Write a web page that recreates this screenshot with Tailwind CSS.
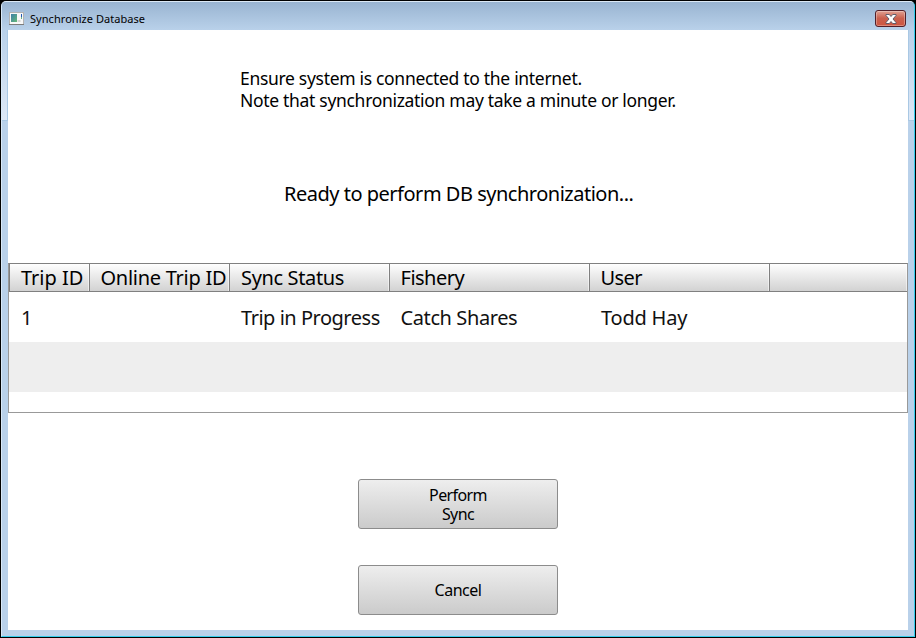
<!DOCTYPE html>
<html lang="en">
<head>
<meta charset="utf-8">
<title>Synchronize Database</title>
<script src="https://cdn.jsdelivr.net/npm/@tailwindcss/browser@4"></script>
</head>
<body class="h-[638px] w-[916px] overflow-hidden bg-black p-px font-['Noto_Sans','Liberation_Sans',sans-serif] text-black">
<div class="flex h-[636px] w-[914px] flex-col rounded-t-[5px] border border-t-[#dce9f5] border-r-[#35cdec] border-b-[#35cdec] border-l-[#d9e9f8] bg-[#b9d1ea]">
  <header class="flex h-7 shrink-0 items-start justify-between rounded-t-[4px] bg-linear-to-b from-[#99b4d1] to-[#b9d1ea] pr-[8px] pl-[7px]">
    <div class="flex h-[32px] items-center">
      <svg class="h-[13px] w-[15px]" viewBox="0 0 15 13">
        <defs><linearGradient id="pic" x1="0" y1="0" x2="1" y2="1"><stop offset="0" stop-color="#3d7fa8"/><stop offset="1" stop-color="#64b878"/></linearGradient></defs>
        <rect x=".5" y=".5" width="14" height="12" fill="#f8f8f8" stroke="#b3b3b3"/>
        <path d="M0 12.5H15" stroke="#7c7c7c"/>
        <rect x="2" y="2" width="6" height="8" fill="url(#pic)"/>
        <rect x="8.500" y="8" width="3" height="2" fill="#d5d5d5"/>
        <rect x="12" y="2" width="1" height="3" fill="#2458b4"/>
        <rect x="12" y="5" width="1" height="2" fill="#69b185"/>
      </svg>
      <h1 class="mt-[2px] ml-[6px] text-[11px] leading-4 tracking-[0.05px]">Synchronize Database</h1>
    </div>
    <button aria-label="Close" class="mt-2 flex h-[17px] w-[31px] items-center justify-center rounded-[3px] border border-[#521f28] bg-linear-to-b from-[#e0a193] from-0% via-[#c9604e] via-48% to-[#cf5540] shadow-[inset_0_0_0_1px_rgba(255,255,255,0.3)]">
      <svg class="h-[10px] w-[12px]" viewBox="0 0 12 10">
        <path d="M1 .5H4.300L6 2.500 7.700.5H11V1.500L8 5 11 8.500V9.500H7.700L6 7.500 4.300 9.500H1V8.500L4 5 1 1.500Z" fill="#fff" stroke="#535666" stroke-width=".9"/>
      </svg>
    </button>
  </header>
  <div class="flex h-[600px] shrink-0">
    <div class="w-[6px] shrink-0">
      <div class="h-[91px] border-r border-b border-[#a9c8e4] bg-linear-to-b from-[#b9d1ea] to-[#dde8f6]"></div>
    </div>
    <main class="flex w-[900px] shrink-0 flex-col items-center bg-white">
      <p class="mt-[37px] w-[436px] text-[17.5px] leading-[22px] tracking-[-0.31px] whitespace-nowrap">Ensure system is connected to the internet.<br>Note that synchronization may take a minute or longer.</p>
      <p class="mt-[69px] h-7 w-[348px] text-[20px] leading-7 tracking-[-0.49px] whitespace-nowrap">Ready to perform DB synchronization...</p>
      <section class="mt-[55px] h-[150px] w-[900px] border border-[#999] border-t-[#808080] text-[20px] whitespace-nowrap">
        <div class="flex h-7 border-b border-l border-[#808080] bg-linear-to-b from-[#fefefe] to-[#d2d2d2] leading-[27px] [&>div]:border-[#808080] [&>div]:shadow-[inset_-1px_0_0_rgba(255,255,255,0.5)]">
          <div class="w-[80px] border-r pl-[11px] tracking-[-0.03px]">Trip ID</div>
          <div class="w-[140px] border-r pl-[10.5px] tracking-[-0.27px]">Online Trip ID</div>
          <div class="w-[160px] border-r pl-[11px] tracking-[-0.35px]">Sync Status</div>
          <div class="w-[200px] border-r pl-[10.5px] tracking-[-0.5px]">Fishery</div>
          <div class="w-[180px] border-r pl-[10.5px] tracking-[-0.6px]">User</div>
          <div class="flex-1"></div>
        </div>
        <div class="flex h-[50px] pl-px leading-[52px] text-[#111]">
          <div class="w-[80px] pl-[11px]">1</div>
          <div class="w-[140px]"></div>
          <div class="w-[160px] pl-[11px] tracking-[-0.48px]">Trip in Progress</div>
          <div class="w-[200px] pl-[10.5px] tracking-[-0.4px]">Catch Shares</div>
          <div class="w-[180px] pl-[11px] tracking-[-0.2px]">Todd Hay</div>
        </div>
        <div class="h-[50px] bg-[#eee]"></div>
      </section>
      <button class="mt-[66px] h-[50px] w-[200px] rounded-[3px] border border-[#8c8c8c] bg-linear-to-b from-[#eee] to-[#cbcbcb] pt-[2px] text-[16px] leading-[19px] tracking-[-0.6px]">Perform<br>Sync</button>
      <button class="mt-[36px] h-[50px] w-[200px] rounded-[3px] border border-[#8c8c8c] bg-linear-to-b from-[#eee] to-[#cbcbcb] text-[16px] leading-[19px] tracking-[-0.5px]">Cancel</button>
    </main>
    <div class="w-[6px] shrink-0">
      <div class="h-[91px] border-b border-l border-[#a9c8e4] bg-linear-to-b from-[#b9d1ea] to-[#dde8f6]"></div>
    </div>
  </div>
</div>
</body>
</html>
